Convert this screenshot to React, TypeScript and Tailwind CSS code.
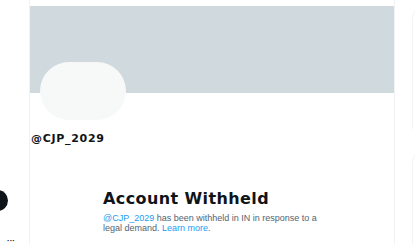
export default function App() {
  return (
    <div className="flex w-[415px] h-[245px] overflow-hidden bg-white" style={{ fontFamily: '"Liberation Sans", Arial, sans-serif' }}>
      <div className="w-[30px] shrink-0 border-r border-[#eff3f4] flex flex-col">
        <div className="mt-[190px] ml-[-14px] w-[22px] h-[22px] rounded-full bg-[#0f1419]" />
        <div className="mt-[26px] ml-[7px] text-[8px] leading-none font-bold text-[#0f1419]">···</div>
      </div>

      <div className="w-[365px] shrink-0 border-r border-[#eff3f4] flex flex-col pt-[6px]">
        <div className="h-[87px] bg-[#cfd9de]" />
        <div className="ml-[10px] mt-[-31px] w-[86px] h-[58px] rounded-full bg-[#f7f9f9]" />
        <div className="mt-[13px] ml-[1px] text-[11px] leading-none font-bold tracking-[0.7px] text-[#0f1419]" style={{ fontFamily: '"DejaVu Sans", sans-serif' }}>@CJP_2029</div>
        <div className="mt-[47px] ml-[73px]">
          <h1 className="text-[16px] leading-none font-bold tracking-[0.4px] text-[#0f1419]" style={{ fontFamily: '"DejaVu Sans", sans-serif' }}>Account Withheld</h1>
          <p className="mt-[6px] text-[9px] leading-[10px] text-[#536471]">
            <span className="text-[#1d9bf0]">@CJP_2029</span> has been withheld in IN in response to a
            <br />
            legal demand. <span className="text-[#1d9bf0]">Learn more</span>.
          </p>
        </div>
      </div>

      <div className="flex-1 flex flex-col pl-[17px] pt-[5px] gap-[20px]">
        <div className="h-[130px] w-[40px] rounded-tl-[14px] border-l border-t border-[#f2f4f5]" />
        <div className="h-[100px] w-[40px] rounded-tl-[14px] border-l border-t border-[#f2f4f5]" />
      </div>
    </div>
  );
}
